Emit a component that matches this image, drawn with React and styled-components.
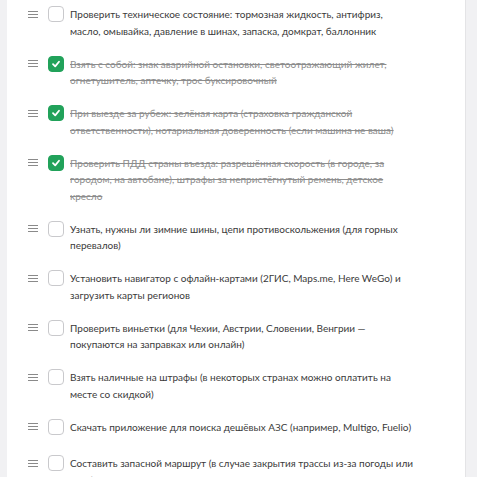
import React, { useState } from 'react';
import styled, { createGlobalStyle } from 'styled-components';

const GlobalStyle = createGlobalStyle`
  html, body {
    margin: 0;
    padding: 0;
    height: 100%;
    background: #f1f1f3;
    overflow: hidden;
  }
  #root {
    height: 100%;
  }
`;

const Page = styled.div`
  display: flex;
  height: 477px;
`;

const Gutter = styled.div`
  width: 7px;
  flex-shrink: 0;
  background: #f1f1f3;
`;

const ListPanel = styled.div`
  width: 458px;
  flex-shrink: 0;
  background: #fff;
  overflow: hidden;
`;

const ScrollTrack = styled.div`
  flex: 1;
  background: #f1f1f3;
  border-left: 1px solid #e4e4e6;
`;

const List = styled.ul`
  list-style: none;
  margin: 0;
  padding: 6px 0 0 21px;
`;

const Row = styled.li`
  display: flex;
  align-items: flex-start;
  min-height: 20px;
  padding-bottom: 16.5px;
`;

const Handle = styled.span`
  width: 10px;
  height: 16px;
  flex-shrink: 0;
  display: flex;
  flex-direction: column;
  justify-content: center;
  gap: 2px;
  margin-right: 10px;
  cursor: grab;

  i {
    display: block;
    height: 1px;
    background: #8a8a8a;
  }
`;

const Box = styled.button`
  width: 16px;
  height: 16px;
  flex-shrink: 0;
  margin: 0 6px 0 0;
  padding: 0;
  border-radius: 4px;
  border: 1px solid ${({ $checked }) => ($checked ? '#21a25a' : '#c9c9cc')};
  background: ${({ $checked }) => ($checked ? '#21a25a' : '#fff')};
  display: flex;
  align-items: center;
  justify-content: center;
  cursor: pointer;
`;

const Label = styled.span`
  width: 345px;
  font-family: Lato, "Noto Sans", sans-serif;
  font-size: 10px;
  line-height: 16.5px;
  color: ${({ $done }) => ($done ? '#8d8d8d' : '#3a3a3a')};
  text-decoration: ${({ $done }) => ($done ? 'line-through' : 'none')};
`;

const initialTasks = [
  { text: 'Проверить техническое состояние: тормозная жидкость, антифриз, масло, омывайка, давление в шинах, запаска, домкрат, баллонник', done: false },
  { text: 'Взять с собой: знак аварийной остановки, светоотражающий жилет, огнетушитель, аптечку, трос буксировочный', done: true },
  { text: 'При выезде за рубеж: зелёная карта (страховка гражданской ответственности), нотариальная доверенность (если машина не ваша)', done: true },
  { text: 'Проверить ПДД страны въезда: разрешённая скорость (в городе, за городом, на автобане), штрафы за непристёгнутый ремень, детское кресло', done: true },
  { text: 'Узнать, нужны ли зимние шины, цепи противоскольжения (для горных перевалов)', done: false },
  { text: 'Установить навигатор с офлайн-картами (2ГИС, Maps.me, Here WeGo) и загрузить карты регионов', done: false },
  { text: 'Проверить виньетки (для Чехии, Австрии, Словении, Венгрии — покупаются на заправках или онлайн)', done: false },
  { text: 'Взять наличные на штрафы (в некоторых странах можно оплатить на месте со скидкой)', done: false },
  { text: 'Скачать приложение для поиска дешёвых АЗС (например, Multigo, Fuelio)', done: false },
  { text: 'Составить запасной маршрут (в случае закрытия трассы из-за погоды или ДТП)', done: false },
];

const Check = () => (
  <svg width="10" height="10" viewBox="0 0 10 10" fill="none">
    <path d="M2 5.2 L4.2 7.4 L8 2.8" stroke="#fff" strokeWidth="1.8" strokeLinecap="round" strokeLinejoin="round" />
  </svg>
);

export default function App() {
  const [tasks, setTasks] = useState(initialTasks);

  const toggle = (idx) => {
    setTasks(tasks.map((t, i) => (i === idx ? { ...t, done: !t.done } : t)));
  };

  return (
    <>
      <GlobalStyle />
      <Page>
        <Gutter />
        <ListPanel>
          <List>
            {tasks.map((task, idx) => (
              <Row key={idx}>
                <Handle><i /><i /><i /></Handle>
                <Box $checked={task.done} onClick={() => toggle(idx)}>
                  {task.done && <Check />}
                </Box>
                <Label $done={task.done}>{task.text}</Label>
              </Row>
            ))}
          </List>
        </ListPanel>
        <ScrollTrack />
      </Page>
    </>
  );
}
